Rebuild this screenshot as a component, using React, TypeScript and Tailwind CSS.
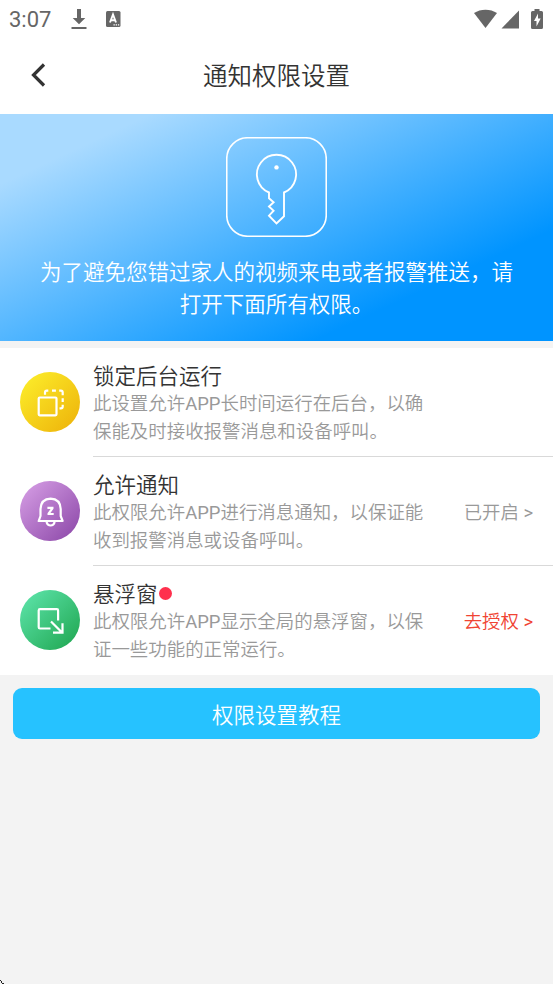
import type { ReactNode } from 'react';

function StatusBar() {
  return (
    <div className="flex h-[37px] shrink-0 items-center pl-[9px] text-[#666]">
      <span className="w-[62px] pt-[2px] font-[Roboto] text-[22px] leading-[37px]">3:07</span>
      <svg className="h-[22px] w-4" viewBox="0 0 16 22" fill="#666">
        <path d="M6 1h4v9h4.300L8 16.300 1.700 10H6z" />
        <path d="M0.500 19h15v2h-15z" />
      </svg>
      <svg className="ml-[19px] h-4 w-[15px]" viewBox="0 0 15 16">
        <rect x="0" y="0" width="14.500" height="16" rx="1.500" fill="#666" />
        <path d="M4 11.500L7 3.500l3 8M5 9.200h4" fill="none" stroke="#fff" strokeWidth="1.900" />
        <path d="M7.500 13.300h1.300v1.200H7.500zM9.700 13.300H11v1.200H9.700zM11.900 13.300h1.300v1.200h-1.300z" fill="#fff" />
      </svg>
      <svg className="ml-auto h-[22px] w-[79px]" viewBox="474 7 79 22" fill="#666">
        <path d="M474 12C480.500 7.500 490.500 7.500 497 12L485.500 27z" />
        <path d="M519 9.500v18h-17.500z" />
        <path d="M534.500 8h5v2h2q1.500 0 1.500 1.500v15q0 1.500-1.500 1.500h-9q-1.500 0-1.500-1.500v-15q0-1.500 1.500-1.500h2z" />
        <path d="M538 12.500l-4 7.500h2.500v5.500l4.200-8H538z" fill="#fff" />
      </svg>
    </div>
  );
}

function Header() {
  return (
    <header className="grid h-[77px] shrink-0 grid-cols-[80px_1fr_80px] items-center">
      <svg className="-mt-[2px] ml-[30px] h-6 w-4" viewBox="0 0 16 24" fill="none" stroke="#333" strokeWidth="3.200">
        <path d="M14 1.500L3.500 12 14 22.500" />
      </svg>
      <h1 className="pt-[3px] text-center text-[24.500px] font-[350] leading-[36px] text-[#333]">通知权限设置</h1>
    </header>
  );
}

function Hero() {
  return (
    <section className="flex h-[227px] shrink-0 flex-col items-center bg-[linear-gradient(155deg,#a9daff_14.500%,#0094ff_77%)] pt-[23px]">
      <svg className="h-[100px] w-[101px]" viewBox="0 0 101 100" fill="none" stroke="#fff">
        <rect x="0.750" y="0.750" width="99.500" height="98.500" rx="21" strokeWidth="1.600" />
        <path
          d="M43 55.500A19.600 19.600 0 1 1 58 55.500V79.300L50.500 86.500 43 78.700 47.600 73.700 43 69.500 47.600 65.300 43 61.300z"
          strokeWidth="1.900"
        />
        <circle cx="50.500" cy="30.400" r="2.200" fill="#fff" stroke="none" />
      </svg>
      <p className="mt-[20px] text-center text-[21.500px] font-[350] leading-[32px] text-white">
        为了避免您错过家人的视频来电或者报警推送，请
        <br />
        打开下面所有权限。
      </p>
    </section>
  );
}

type RowProps = {
  title: string;
  lines: [ReactNode, ReactNode];
  color: string;
  icon: ReactNode;
  dot?: boolean;
  action?: string;
  actionColor?: string;
  last?: boolean;
};

const App_ = () => <span className="font-normal">APP</span>;

function Row({ title, lines, color, icon, dot, action, actionColor, last }: RowProps) {
  return (
    <div className="flex h-[109px] pl-5">
      <div className={`mt-[24px] size-[60px] shrink-0 rounded-full ${color}`}>
        <svg className="size-[60px]" viewBox="0 0 60 60" fill="none" stroke="#fff" strokeWidth="2.200">
          {icon}
        </svg>
      </div>
      <div className={`ml-[13px] flex grow items-center border-b pr-5 ${last ? 'border-transparent' : 'border-[#d9d9d9]'}`}>
        <div className="grow whitespace-nowrap pt-[6px]">
          <h2 className="flex items-center text-[21.500px] font-[350] leading-[26px] text-[#333]">
            {title}
            {dot && <i className="-mt-[3px] ml-px size-[13px] rounded-full bg-[#ff304d]" />}
          </h2>
          <p className="text-[18.450px] font-[350] leading-[28px] text-[#999]">
            {lines[0]}
            <br />
            {lines[1]}
          </p>
        </div>
        {action && (
          <span className={`whitespace-nowrap pt-[3px] text-[18.400px] font-[350] leading-[28px] ${actionColor}`}>
            {action} <span className="font-normal">&gt;</span>
          </span>
        )}
      </div>
    </div>
  );
}

export default function App() {
  return (
    <div className="relative flex h-[984px] w-[553px] flex-col overflow-hidden bg-[#f3f3f3] font-[Roboto,'Noto_Sans_CJK_SC',sans-serif]">
      <div className="bg-white">
        <StatusBar />
        <Header />
      </div>
      <Hero />
      <main className="mt-[7px] bg-white">
        <Row
          title="锁定后台运行"
          lines={[<>此设置允许<App_ />长时间运行在后台，以确</>, '保能及时接收报警消息和设备呼叫。']}
          color="bg-[linear-gradient(135deg,#fbe928_12%,#efb80d_88%)]"
          icon={
            <>
              <rect x="18.700" y="25.500" width="17.800" height="17.800" rx="1" />
              <path d="M25 22.700V20.500q0-1.800 1.800-1.800H28.300M32 18.700h3.900M39.200 18.700h1.700q1.800 0 1.800 1.800V23.300M42.700 26.300v3.600M42.700 32.700v1.800q0 1.800-1.800 1.800H39.500" />
            </>
          }
        />
        <Row
          title="允许通知"
          lines={[<>此权限允许<App_ />进行消息通知，以保证能</>, '收到报警消息或设备呼叫。']}
          color="bg-[linear-gradient(135deg,#cf96df_12%,#9350ae_88%)]"
          action="已开启"
          actionColor="text-[#999]"
          icon={
            <>
              <path d="M18.700 40h23.900L40.700 35V28Q40.200 18 30.600 17.700 21 18 20.500 28v7z" strokeLinejoin="round" />
              <path d="M26.500 41q1 3.500 4.100 3.500t4.100-3.500" />
              <path d="M27.400 26.800h5v.5L28.600 32.600v.400h5.100" />
            </>
          }
        />
        <Row
          title="悬浮窗"
          lines={[<>此权限允许<App_ />显示全局的悬浮窗，以保</>, '证一些功能的正常运行。']}
          color="bg-[linear-gradient(135deg,#58dfa3_12%,#25ac59_88%)]"
          dot
          last
          action="去授权"
          actionColor="text-[#f04433]"
          icon={
            <>
              <path d="M30.500 38.500H20q-1.300 0-1.300-1.300V20.500q0-1.300 1.300-1.300h16.800q1.300 0 1.300 1.300V30.500" />
              <path d="M31 31.500L42.500 43M42.500 33.200v9.500h-9.500" />
            </>
          }
        />
      </main>
      <button className="mx-[13px] mt-[13px] h-[51px] shrink-0 rounded-[9px] bg-[#26c2ff] pt-[5px] text-[21.500px] font-[350] text-white">
        权限设置教程
      </button>
      <svg className="absolute bottom-0 left-0 h-1 w-1" viewBox="0 0 4 4" fill="#222">
        <path d="M0 0h1v1H0zM1 1h1v1H1zM2 3h2v1H2zM1 2h1v1H1z" />
      </svg>
    </div>
  );
}
